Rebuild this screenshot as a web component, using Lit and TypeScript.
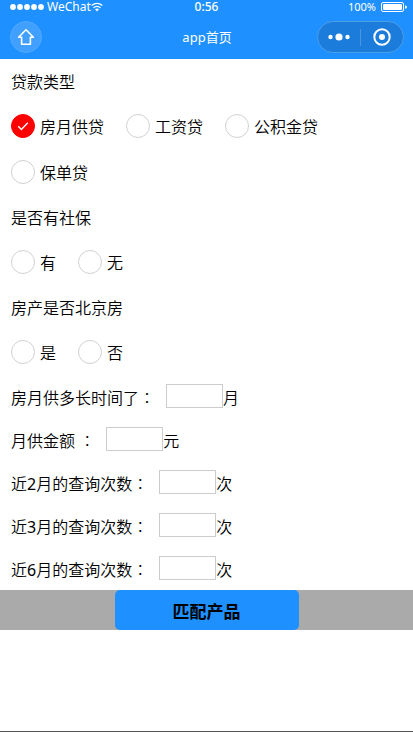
import { LitElement, html, css, svg } from "lit";
import { customElement, state } from "lit/decorators.js";

interface Choice {
  name: string;
  title: string;
  options: string[];
}

interface Field {
  id: string;
  label: string;
  unit: string;
}

const choices: Choice[] = [
  { name: "loan", title: "贷款类型", options: ["房月供贷", "工资贷", "公积金贷", "保单贷"] },
  { name: "social", title: "是否有社保", options: ["有", "无"] },
  { name: "beijing", title: "房产是否北京房", options: ["是", "否"] },
];

const fields: Field[] = [
  { id: "duration", label: "房月供多长时间了", unit: "月" },
  { id: "amount", label: "月供金额 ", unit: "元" },
  { id: "query2", label: "近2月的查询次数", unit: "次" },
  { id: "query3", label: "近3月的查询次数", unit: "次" },
  { id: "query6", label: "近6月的查询次数", unit: "次" },
];

// Digits are set in the regular weight, the characters around them lighter.
const withDigits = (text: string) =>
  text.split(/(\d+)/).map((part) => (/^\d/.test(part) ? html`<span class="digit">${part}</span>` : part));

@customElement("app-header")
export class AppHeader extends LitElement {
  static styles = css`
    :host {
      display: block;
      background: #1e90ff;
      color: #fff;
      padding-bottom: 6px;
      font-weight: 400;
    }
    .status,
    .nav {
      display: grid;
      grid-template-columns: 1fr auto 1fr;
      align-items: center;
    }
    .status {
      height: 13px;
      padding: 0 6px;
      font-size: 12px;
      line-height: 13px;
      margin-bottom: 8px;
    }
    .side {
      display: flex;
      align-items: center;
    }
    .start {
      padding-left: 4px;
    }
    .end {
      justify-content: flex-end;
      gap: 5px;
      font-size: 11px;
    }
    .signal {
      margin-right: 3px;
    }
    .time {
      font-weight: 500;
    }
    svg {
      display: block;
      flex: none;
    }
    .nav {
      padding: 0 9px 0 10px;
    }
    h1 {
      margin: 0;
      font-size: 13px;
      font-weight: 400;
      line-height: 20px;
    }
    button {
      appearance: none;
      border: 0;
      margin: 0;
      padding: 0;
      background: none;
      color: inherit;
      display: grid;
      place-items: center;
    }
    .home {
      width: 32px;
      height: 32px;
      box-sizing: border-box;
      border-radius: 50%;
      border: 1px solid #51a9ff;
      background: #409fff;
    }
    .capsule {
      display: flex;
      align-items: center;
      justify-self: end;
      box-sizing: border-box;
      width: 87px;
      height: 32px;
      border: 1px solid #4b9fea;
      border-radius: 16px;
      background: #1b7cdb;
    }
    .capsule button {
      flex: 1;
      height: 30px;
    }
    .divider {
      width: 1px;
      height: 17px;
      background: #4996e2;
    }
  `;

  render() {
    return html`
      <div class="status">
        <div class="side start">
          <svg class="signal" width="34" height="8" viewBox="0 0 34 8" fill="#fff">
            ${[3, 10, 17, 24, 31].map((x) => svg`<circle cx=${x} cy="4" r="2.9" />`)}
          </svg>
          <span>WeChat</span>
          <svg width="12" height="10" viewBox="0 0 12 10" fill="none" stroke="#fff" stroke-width="1.3">
            <path d="M.6 3.6Q6-.8 11.4 3.6M2.5 5.8Q6 2.8 9.5 5.8" />
            <path d="M4 7.3Q6 5.8 8 7.3L6 9.4Z" fill="#fff" stroke="none" />
          </svg>
        </div>
        <span class="time">0:56</span>
        <div class="side end">
          <span>100%</span>
          <svg width="26" height="10" viewBox="0 0 26 10">
            <rect x=".5" y=".5" width="22" height="9" rx="1.5" fill="none" stroke="#fff" />
            <rect x="2" y="2" width="19" height="6" rx="1" fill="#fff" />
            <path d="M24 3.2Q26 3.6 26 5T24 6.8Z" fill="#fff" />
          </svg>
        </div>
      </div>
      <div class="nav">
        <button class="home" aria-label="首页">
          <svg width="18" height="18" viewBox="0 0 18 18" fill="none" stroke="#fff" stroke-width="1.6" stroke-linejoin="round">
            <path d="M9 1.8 1.6 9.2H4.6V16.2H13.4V9.2H16.4Z" />
          </svg>
        </button>
        <h1>app首页</h1>
        <div class="capsule">
          <button aria-label="更多">
            <svg width="22" height="8" viewBox="0 0 22 8" fill="#fff">
              <circle cx="2.5" cy="4" r="2.2" />
              <circle cx="11" cy="4" r="3.6" />
              <circle cx="19.5" cy="4" r="2.2" />
            </svg>
          </button>
          <span class="divider"></span>
          <button aria-label="关闭">
            <svg width="18" height="18" viewBox="0 0 18 18">
              <circle cx="9" cy="9" r="7.7" fill="none" stroke="#fff" stroke-width="2" />
              <circle cx="9" cy="9" r="3" fill="#fff" />
            </svg>
          </button>
        </div>
      </div>
    `;
  }
}

@customElement("app-root")
export class AppRoot extends LitElement {
  static styles = css`
    :host {
      display: block;
      box-sizing: border-box;
      min-height: 100vh;
      border-bottom: 1px solid #555;
      background: #fff;
      color: #000;
      font-family: "Noto Sans", "Noto Sans CJK SC", sans-serif;
      font-size: 16px;
      font-weight: 350;
      line-height: 24px;
    }
    fieldset {
      margin: 0;
      padding: 0 11px;
      border: 0;
      min-width: 0;
    }
    legend {
      box-sizing: border-box;
      height: 44px;
      padding: 11px 0 9px;
    }
    .options {
      display: flex;
      flex-wrap: wrap;
      column-gap: 22px;
    }
    .option {
      display: flex;
      align-items: center;
      gap: 5px;
      height: 46px;
    }
    .text {
      padding-top: 2px;
    }
    .mark {
      display: grid;
      place-items: center;
    }
    .mark > * {
      grid-area: 1 / 1;
    }
    .mark input {
      appearance: none;
      box-sizing: border-box;
      margin: 0;
      width: 24px;
      height: 24px;
      border: 1px solid #d1d1d1;
      border-radius: 50%;
      background: #fff;
    }
    .mark input:checked {
      border-color: #f00;
      background: #f00;
    }
    .mark svg {
      visibility: hidden;
      z-index: 1;
      pointer-events: none;
    }
    .mark input:checked + svg {
      visibility: visible;
    }
    .field {
      display: flex;
      align-items: center;
      box-sizing: border-box;
      height: 43px;
      padding: 9px 11px 10px;
      white-space: pre;
    }
    .field .text {
      padding-top: 3px;
    }
    .digit {
      font-weight: 400;
    }
    .colon {
      font-family: "Noto Sans CJK TC", sans-serif;
      font-weight: 300;
      line-height: 16px;
    }
    .field input {
      box-sizing: border-box;
      width: 57px;
      height: 24px;
      margin: 0 0 0 11px;
      padding: 0 4px;
      border: 1px solid #ccc;
      border-radius: 0;
      background: #fff;
      font: inherit;
    }
    .actions {
      display: flex;
      justify-content: center;
      background: #aaa;
    }
    .submit {
      width: 184px;
      height: 40px;
      padding: 3px 0 0;
      border: 0;
      border-radius: 5px;
      background: #1e90ff;
      color: #000;
      font: inherit;
      font-size: 17px;
      font-weight: 700;
    }
  `;

  @state() private selected: Record<string, string> = { loan: "房月供贷" };

  private choose(name: string, value: string) {
    this.selected = { ...this.selected, [name]: value };
  }

  render() {
    return html`
      <app-header></app-header>
      <form @submit=${(e: Event) => e.preventDefault()}>
        ${choices.map(
          (c) => html`
            <fieldset>
              <legend>${c.title}</legend>
              <div class="options">
                ${c.options.map(
                  (o) => html`
                    <label class="option">
                      <span class="mark">
                        <input
                          type="radio"
                          name=${c.name}
                          value=${o}
                          .checked=${this.selected[c.name] === o}
                          @change=${() => this.choose(c.name, o)}
                        />
                        <svg width="12" height="10" viewBox="0 0 12 10" fill="none" stroke="#fff" stroke-width="1.4">
                          <path d="M1.2 5.2 4.4 8.4 10.8 1.8" />
                        </svg>
                      </span>
                      <span class="text">${o}</span>
                    </label>
                  `
                )}
              </div>
            </fieldset>
          `
        )}
        ${fields.map(
          (f) => html`<div class="field"><label class="text" for=${f.id}>${withDigits(f.label)}<span class="colon">：</span></label><input id=${f.id} type="text" inputmode="numeric" /><span class="text">${f.unit}</span></div>`
        )}
        <div class="actions"><button class="submit" type="submit">匹配产品</button></div>
      </form>
    `;
  }
}
